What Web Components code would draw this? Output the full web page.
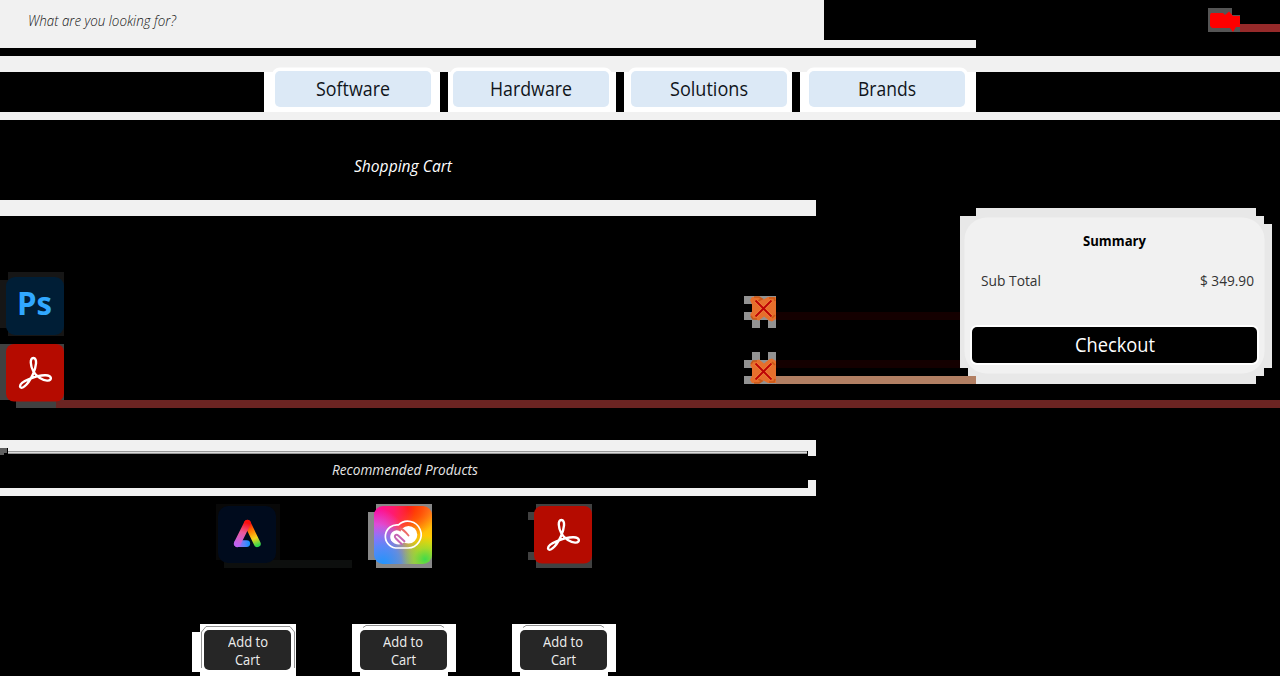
<!DOCTYPE html>
<html lang="en">
<head>
<meta charset="utf-8">
<title>Shopping Cart</title>
<style>
html,body{margin:0;background:#000;overflow:hidden}
body{width:1280px;height:676px;font-family:"Open Sans","Noto Sans",sans-serif}
</style>
</head>
<body>
<shop-page></shop-page>
<script>
const define=(name,css,html)=>{
  const t=document.createElement('template');
  t.innerHTML=`<style>:host{display:block;box-sizing:border-box}*{box-sizing:border-box}.back{position:absolute;inset:0;width:100%;height:100%;overflow:visible;pointer-events:none;z-index:-1}${css}</style>${html}`;
  customElements.define(name,class extends HTMLElement{
    constructor(){super();this.attachShadow({mode:'open'}).append(t.content.cloneNode(true));}
  });
};

/* A label squeezed horizontally to a given width. */
customElements.define('fit-text',class extends HTMLElement{
  constructor(){super();this.attachShadow({mode:'open'}).innerHTML='<style>:host{display:inline-block;white-space:nowrap;flex:none}span{display:inline-block;transform-origin:0 50%}</style><span><slot></slot></span>';}
  connectedCallback(){
    const w=+this.getAttribute('w'),s=this.shadowRoot.querySelector('span');
    this.style.width=w+'px';
    s.style.transform='scaleX('+w/s.getBoundingClientRect().width+')';
  }
});

define('acrobat-icon',':host{width:58px;height:58px}svg{display:block}',`<svg width="58" height="58" viewBox="0 0 58 58"><rect width="58" height="57.5" rx="8" fill="#b50b00"/><path d="M27.4 14C23.5 14 24.4 22 27.4 27.5C30.3 32.6 37 37 41.7 36.6C46.7 36.2 45.7 31.5 39.7 31.3C31 31 14 37.3 14 42.2C14.3 46.5 21.4 42.2 26.6 31C30.7 22.2 31.4 14 27.4 14Z" fill="none" stroke="#fff" stroke-width="2.4"/></svg>`);

define('photoshop-icon',':host{width:58px;height:58px;border-radius:9px;background:#001e36;color:#31a8ff;font:bold 32px/51px "Open Sans","Noto Sans",sans-serif;padding-left:11px}','<fit-text w="35">Ps</fit-text>');

define('express-icon',':host{width:58px;height:58px}svg{display:block}',`<svg width="58" height="58" viewBox="0 0 58 58"><defs>
<linearGradient id="l" gradientUnits="userSpaceOnUse" x1="29" y1="14" x2="21" y2="39"><stop offset=".1" stop-color="#fa0f0f"/><stop offset=".5" stop-color="#ed5a9a"/><stop offset="1" stop-color="#bd62f0"/></linearGradient>
<linearGradient id="r" gradientUnits="userSpaceOnUse" x1="29" y1="15" x2="39" y2="40"><stop offset=".1" stop-color="#fa0f0f"/><stop offset=".4" stop-color="#ff7a00"/><stop offset=".7" stop-color="#f5d51c"/><stop offset="1" stop-color="#2fd64c"/></linearGradient>
<linearGradient id="b" gradientUnits="userSpaceOnUse" x1="18" y1="37" x2="32" y2="37"><stop offset="0" stop-color="#c561e8"/><stop offset=".6" stop-color="#5a83fa"/><stop offset="1" stop-color="#0c91fa"/></linearGradient></defs>
<rect width="58" height="57" rx="10" fill="#000b1d"/><g fill="none" stroke-linecap="round" stroke-linejoin="round" stroke-width="6.8"><path d="M19.5 37.6H28.7" stroke="url(#b)"/><path d="M29.4 17.3L39.3 37.8" stroke="url(#r)"/><path d="M19.3 37.6L29.4 17.3" stroke="url(#l)"/></g></svg>`);

define('cloud-icon',':host{width:58px;height:58px;border-radius:9px;background:radial-gradient(circle at 88% 92%,#3fdc4b 0,#7ce03baa 15%,transparent 32%),radial-gradient(circle at 15% 100%,#2094ff 0,#3e91ffcc 24%,transparent 52%),radial-gradient(circle at 0% 58%,#c65cff 0,#d25cf5bb 24%,transparent 48%),radial-gradient(circle at 0% 10%,#ff009d 0,#ff009daa 25%,transparent 52%),radial-gradient(circle at 58% 3%,#ff2600 0,#ff3b00bb 22%,transparent 46%),radial-gradient(circle at 95% 65%,#ffd600 0,#ffca00bb 30%,transparent 58%),#ff7b2e}svg{display:block}',`<svg width="58" height="58" viewBox="0 0 58 58" fill="none"><path d="M21.500 42H34A13.400 13.400 0 1 0 24.500 18.900A11.600 11.600 0 0 0 21.500 42Z" stroke="#fff" stroke-width="1.7"/><circle cx="34.5" cy="28.700" r="8.800" fill="#fff"/><path d="M30 36.500Q26 40 20.500 37.500C14 34.500 15 25 22.500 24.300Q25 24.200 27 26L34 33Z" fill="#fff"/><path d="M27.700 38Q25.500 36.200 21.700 32.200C19.500 29.700 22 27.600 24.500 29.800L30.400 35.300" stroke="#c765b4" stroke-width="2" stroke-linecap="round"/><path d="M26.500 22.500Q29.500 23.500 34.500 29.500" stroke="#ed6a66" stroke-width="1.900" stroke-linecap="round"/></svg>`);

define('remove-button',':host{width:32px;height:32px}svg{display:block}',`<svg width="32" height="32" viewBox="0 0 32 32"><path d="M0 0H32V24H0ZM8 24h8v8H8ZM24 24h8v8h-8Z" fill="#929292"/><path d="M0 8H8V16H0ZM16 24h8v8h-8Z" fill="#000"/><path d="M8 1h7l4.500 2.500L24 1h8v22l-4 2.500-3-1-5-4-5 4-5-1.500-4-4 2-3.500v-7L6 4Z" fill="#e66f2c"/><path d="M10 1h5l3 2-4 2M25 2h5l1 3M7 20l2 3h4M28 22l3-3" fill="none" stroke="#c95816" stroke-width="1.6"/><path d="M11.5 4.5L27.5 20.5M27.5 4.5L11.5 20.5" stroke="#f48d42" stroke-width="3.200"/><path d="M11.5 4.5L27.5 20.5M27.5 4.5L11.5 20.5" stroke="#bd0505" stroke-width="2"/></svg>`);

define('search-header',':host{position:relative;z-index:0;height:48px;font:italic 300 14.8px/40px "Open Sans",sans-serif;color:#111;padding-left:28px}',
`<svg class="back"><path d="M0 0H824V40H976V48H0Z" fill="#f1f1f1"/><path d="M1208 8h24v6h8v18h-32Z" fill="#555"/><path d="M1232 8h8v7h-8Z" fill="#000"/><path d="M1240 24h40v8h-40Z" fill="#962a2a"/><path d="M1211 13h12l2 2 4-3.500 4 4.500h7v11h-4l-3 5-3-4h-18l-2-2V15Z" fill="#f00"/></svg><fit-text w="148">What are you looking for?</fit-text>`);

define('nav-button',':host{width:156px;height:36px;border-radius:5px;background:#dce9f6;box-shadow:0 0 0 3.5px #fff;text-align:center;font-size:20px;line-height:36px;color:#10151b}','<slot></slot>');
define('nav-bar',':host{position:relative;z-index:0;height:64px;margin-top:8px;padding:15px 0 0 274.5px;display:flex;gap:22.3px}',
`<svg class="back"><path d="M0 0H1280V16H0ZM0 56H1280V64H0Z" fill="#f1f1f1"/><path d="M264 16H440V56H264ZM448 16H616V56H448ZM624 16H792V56H624ZM800 16H976V56H800Z" fill="#fff"/></svg>
<nav-button><fit-text w="74">Software</fit-text></nav-button><nav-button><fit-text w="82">Hardware</fit-text></nav-button><nav-button><fit-text w="78">Solutions</fit-text></nav-button><nav-button><fit-text w="58">Brands</fit-text></nav-button>`);

define('cart-title',':host{width:816px;height:96px;border-bottom:16px solid #f1f1f1;padding:34px 0 0 354px;font:italic 17px/24px "Open Sans",sans-serif;color:#fff}','<fit-text w="98">Shopping Cart</fit-text>');

define('order-summary',':host{position:relative;z-index:0;width:320px;height:176px;margin-top:-8px;padding:21px 0 0 12px;color:#333}.title{width:285px;text-align:center;font:bold 14.5px/24px "Open Sans",sans-serif;color:#000}.row{display:flex;justify-content:space-between;width:273px;margin:15px 0 0 9px;font:400 14.6px/24px "Open Sans",sans-serif}.pay{width:285px;height:36px;margin-top:34.5px;border-radius:5px;background:#000;color:#fff;box-shadow:0 0 0 2px #fff;text-align:center;font:400 20px/36px "Open Sans",sans-serif}',
`<svg class="back"><path d="M16 0H296V8H304V16H312V160H304V168H296V176H16V168H8V160H0V8H16Z" fill="#e8e8e8"/><rect x="4.5" y="9.5" width="300" height="156" rx="22" fill="#f1f1f1"/></svg><div class="title"><fit-text w="63">Summary</fit-text></div><div class="row"><fit-text w="60">Sub Total</fit-text><fit-text w="54">$ 349.90</fit-text></div><div class="pay"><fit-text w="80">Checkout</fit-text></div>`);

define('cart-body',':host{position:relative;z-index:0;height:224px;display:flex}.icons{width:744px;padding:61px 0 0 6px}.icons acrobat-icon{margin-top:9px}.remove{width:216px;padding-top:80px}.remove remove-button+remove-button{margin-top:24px;transform:scaleY(-1)}',
`<svg class="back"><path d="M8 56H64V120H8V112H0V64H8Z" fill="#161616"/><path d="M0 128H64V192H16V184H0Z" fill="#414141"/><path d="M56 184H1280V192H56Z" fill="#6b2422"/><path d="M776 96H960V104H776ZM776 144H960V152H776Z" fill="#140000"/><path d="M776 160H976V168H776Z" fill="#b27f63"/></svg>
<div class="icons"><photoshop-icon></photoshop-icon><acrobat-icon></acrobat-icon></div><div class="remove"><remove-button></remove-button><remove-button></remove-button></div><order-summary></order-summary>`);

define('recommended-title',':host{position:relative;z-index:0;height:56px;padding:18px 0 0 332px;font:italic 400 14.5px/24px "Open Sans",sans-serif;color:#e6e6e6}',
`<svg class="back" shape-rendering="crispEdges"><path d="M0 0H816V16H808V11H8V8H0ZM0 48H808V40H816V56H0Z" fill="#f1f1f1"/><path d="M8 11H807V12H8ZM8 13H807V14H8Z" fill="#999"/><path d="M8 12H807V13H8Z" fill="#ddd"/><path d="M0 8H7V13H4V15H0Z" fill="#606060"/></svg><fit-text w="146">Recommended Products</fit-text>`);

define('add-button',':host{width:87px;height:40px;border-radius:5px;background:#262626;color:#eee;font:400 14.3px/17.5px "Open Sans",sans-serif;padding-top:3.5px;display:flex;flex-direction:column;align-items:center}','<fit-text w="40">Add to</fit-text><fit-text w="25">Cart</fit-text>');
define('product-grid',':host{position:relative;z-index:0;height:180px}.icons{display:flex;padding:9.5px 0 0 218px}.icons>*+*{margin-left:98px}.icons>:last-child{margin-left:102px}.buttons{display:flex;padding:66px 0 0 204px}.buttons>*+*{margin-left:68.500px}.buttons>:last-child{margin-left:73px}',
`<svg class="back"><path d="M216 8H280V64H216Z" fill="#080808"/><path d="M224 64H352V72H224Z" fill="#0d0f0e"/><path d="M376 8H432V72H376V64H368V16H376Z" fill="#888"/><path d="M536 8H592V72H536V64H528V56H536V24H528V16H536Z" fill="#414141"/>
<path d="M200 128H296V180H200V176H192V136H200ZM352 128H456V176H448V180H360V176H352ZM512 128H616V176H608V180H520V176H512Z" fill="#fff"/><g fill="none" stroke="#777" stroke-width=".8"><path d="M201.500 172V136L206 130.500H290L294.500 136V172M363 131.500L366 129.500H441L444 131.500M523 131.500L526 129.500H601L604 131.500"/></g></svg>
<div class="icons"><express-icon></express-icon><cloud-icon></cloud-icon><acrobat-icon></acrobat-icon></div><div class="buttons"><add-button></add-button><add-button></add-button><add-button></add-button></div>`);

define('shop-page',':host{width:1280px;height:676px;overflow:hidden;background:#000}','<search-header></search-header><nav-bar></nav-bar><cart-title></cart-title><cart-body></cart-body><recommended-title></recommended-title><product-grid></product-grid>');
</script>
</body>
</html>
